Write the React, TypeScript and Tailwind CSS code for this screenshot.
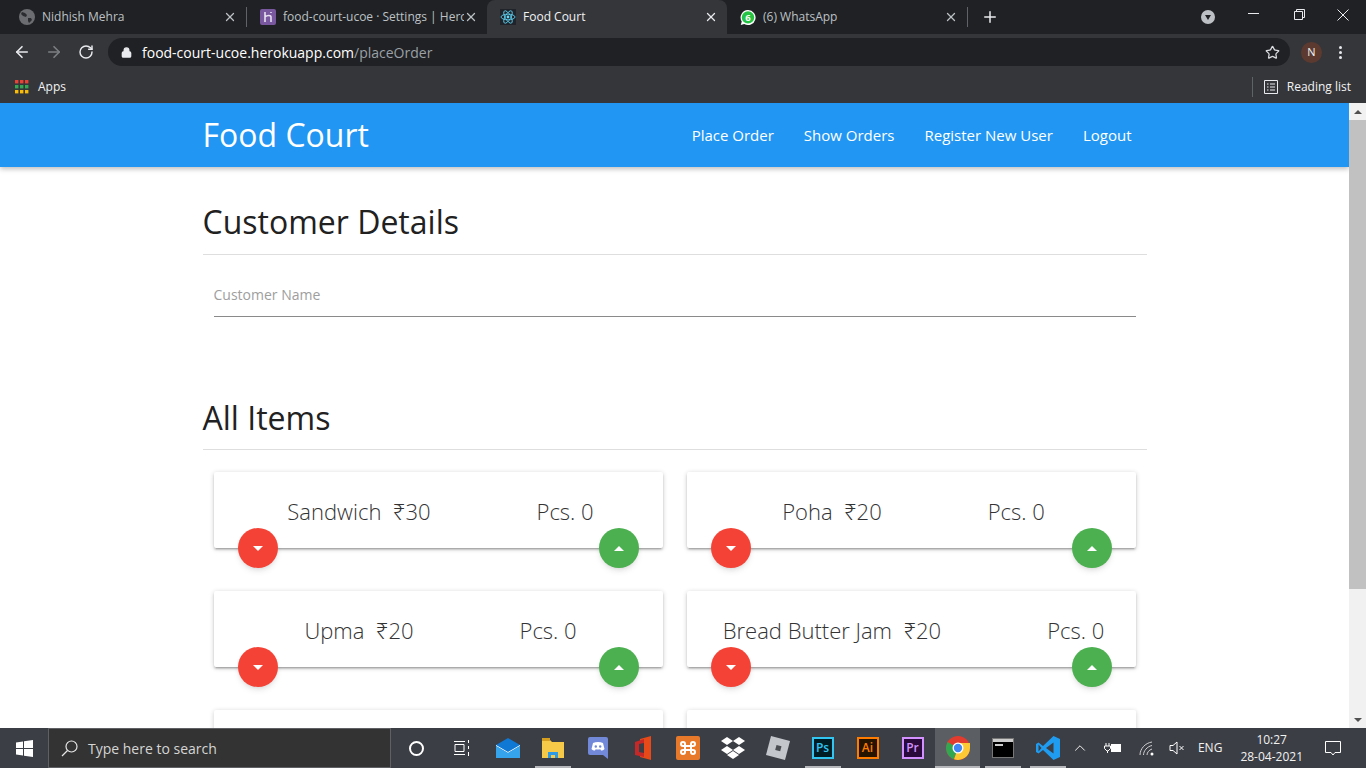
import { ArrowLeft, ArrowRight, ChevronUp, Lock, Plus, RotateCw, Star, X } from "lucide-react";

const ui = "font-['Open_Sans','Noto_Sans',sans-serif]";

const items = [
  [{ name: "Sandwich", price: 30 }, { name: "Poha", price: 20 }],
  [{ name: "Upma", price: 20 }, { name: "Bread Butter Jam", price: 20 }],
];

const Globe = () => (
  <svg width="16" height="16" viewBox="0 0 16 16">
    <circle cx="8" cy="8" r="8" fill="#6b6d70" />
    <path d="M3 3l3 1 2 2-1 2-3-1-2-2zM9 9l3 0 1 2-3 3-1-2z" fill="#2b2c2f" />
  </svg>
);

const HerokuIcon = () => (
  <svg width="16" height="16" viewBox="0 0 16 16">
    <rect width="16" height="16" rx="2" fill="#79589f" />
    <path d="M5 3v10M5 8c2-2 6-2 6 0v5M11 3v1" stroke="#e8e0f0" strokeWidth="1.6" fill="none" />
  </svg>
);

const ReactIcon = () => (
  <svg width="16" height="16" viewBox="0 0 16 16">
    <rect width="16" height="16" fill="#20232a" />
    <circle cx="8" cy="8" r="1.4" fill="#61dafb" />
    <g stroke="#61dafb" strokeWidth="0.8" fill="none">
      <ellipse cx="8" cy="8" rx="7" ry="2.8" />
      <ellipse cx="8" cy="8" rx="7" ry="2.8" transform="rotate(60 8 8)" />
      <ellipse cx="8" cy="8" rx="7" ry="2.8" transform="rotate(120 8 8)" />
    </g>
  </svg>
);

const WhatsAppIcon = () => (
  <svg width="17" height="17" viewBox="0 0 17 17">
    <path d="M8.5 0.5a8 8 0 1 1-4 14.9L0.8 16.4l1.1-3.6A8 8 0 0 1 8.5 0.5z" fill="#fff" />
    <circle cx="8.5" cy="8.4" r="6.6" fill="#25c344" />
    <text x="8.5" y="12" textAnchor="middle" fontSize="10" fontWeight="700" fill="#fff" fontFamily="Open Sans">6</text>
  </svg>
);

const Tab = ({ icon, title, active, fade }: { icon: React.ReactNode; title: string; active?: boolean; fade?: boolean }) => (
  <div
    className={`relative flex h-[34px] w-[240px] shrink-0 items-center pl-[13px] pr-[9px] ${
      active ? "rounded-t-lg bg-[#35363a] text-[#f1f3f4]" : "text-[#bdc1c6]"
    }`}
  >
    <span className="flex w-[16px] shrink-0 justify-center">{icon}</span>
    <span className={`ml-[7px] flex-1 overflow-hidden whitespace-nowrap text-[12px] ${fade ? "w-[176px]" : ""}`}>{title}</span>
    <X size={14} strokeWidth={2.2} className={active ? "text-[#e8eaed]" : "text-[#bdc1c6]"} />
  </div>
);

const Chrome = () => (
  <header className={`${ui} shrink-0`}>
    <div className="flex h-[34px] items-end bg-[#202124]">
      <div className="ml-[6px] flex items-center">
        <Tab icon={<Globe />} title="Nidhish Mehra" />
        <div className="h-[20px] w-px bg-[#5f6368]" />
        <Tab icon={<HerokuIcon />} title="food-court-ucoe · Settings | Hero" fade />
        <Tab icon={<ReactIcon />} title="Food Court" active />
        <Tab icon={<WhatsAppIcon />} title="(6) WhatsApp" />
        <div className="h-[20px] w-px bg-[#5f6368]" />
      </div>
      <Plus size={18} strokeWidth={2} className="mb-[8px] ml-[13px] text-[#e8eaed]" />
      <div className="mb-[10px] ml-[202px] flex h-[14px] w-[14px] items-center justify-center rounded-full bg-[#bdc1c6]">
        <span className="h-0 w-0 border-x-[3.5px] border-t-[5px] border-x-transparent border-t-[#202124]" />
      </div>
      <div className="ml-auto flex h-full items-center text-[#e8eaed]">
        <span className="mb-[7px] mr-[35px] h-px w-[11px] bg-[#e8eaed]" />
        <svg width="11" height="11" viewBox="0 0 11 11" fill="none" stroke="#e8eaed" className="mb-[5px] mr-[32px]">
          <path d="M0.5 2.5h8v8h-8zM2.5 2.5v-2h8v8h-2" />
        </svg>
        <svg width="12" height="12" viewBox="0 0 12 12" stroke="#e8eaed" className="mb-[5px] mr-[17px]">
          <path d="M0.5 0.5l11 11M11.5 0.5l-11 11" />
        </svg>
      </div>
    </div>
    <div className="flex h-[36px] items-center bg-[#35363a] text-[#e8eaed]">
      <ArrowLeft size={18} strokeWidth={2.2} className="ml-[13px]" />
      <ArrowRight size={18} strokeWidth={2.2} className="ml-[14px] text-[#7c7f83]" />
      <RotateCw size={16} strokeWidth={2.2} className="ml-[15px]" />
      <div className="ml-[14px] flex h-[28px] w-[1182px] items-center rounded-full bg-[#202124] pl-[13px] pr-[10px]">
        <Lock size={11} strokeWidth={3} fill="#e8eaed" />
        <span className="ml-[10px] text-[14px] text-white">
          food-court-ucoe.herokuapp.com<span className="text-[#9aa0a6]">/placeOrder</span>
        </span>
        <Star size={15} className="ml-auto text-[#dadce0]" />
      </div>
      <div className="ml-[11px] flex h-[21px] w-[21px] items-center justify-center rounded-full bg-[#5d3a30] text-[11px] text-[#f1f3f4]">N</div>
      <div className="ml-[17px] flex flex-col gap-[2px]">
        <span className="h-[3px] w-[3px] rounded-full bg-[#e8eaed]" />
        <span className="h-[3px] w-[3px] rounded-full bg-[#e8eaed]" />
        <span className="h-[3px] w-[3px] rounded-full bg-[#e8eaed]" />
      </div>
    </div>
    <div className="flex h-[33px] items-center bg-[#35363a] text-[#e8eaed]">
      <svg width="14" height="14" viewBox="0 0 14 14" className="ml-[15px]">
        {[0, 5, 10].map((x, i) =>
          [0, 5, 10].map((y, j) => (
            <rect key={`${i}${j}`} x={x} y={y} width="3.4" height="3.4" fill={["#ea4335", "#34a853", "#fbbc04"][j]} />
          ))
        )}
      </svg>
      <span className="ml-[9px] text-[12px] text-[#f1f3f4]">Apps</span>
      <div className="ml-auto h-[20px] w-px bg-[#5f6368]" />
      <svg width="14" height="14" viewBox="0 0 14 14" fill="none" stroke="#e8eaed" className="ml-[11px]">
        <path d="M0.5 0.5h13v13h-13zM3 4h1.5M6 4h5M3 7h1.5M6 7h5M3 10h1.5M6 10h5" />
      </svg>
      <span className="ml-[9px] mr-[15px] text-[12px] text-[#f1f3f4]">Reading list</span>
    </div>
  </header>
);

const ItemCard = ({ name, price }: { name: string; price: number }) => (
  <div className="relative h-[76px] w-[449px] rounded-[2px] bg-white shadow-[0_2px_2px_0_rgba(0,0,0,0.14),0_3px_1px_-2px_rgba(0,0,0,0.12),0_1px_5px_0_rgba(0,0,0,0.2)]">
    <div className="flex h-[76px] items-center justify-center gap-[106px] pl-[5px] pt-[2px] text-[22px] font-light text-[#333]">
      <span className="whitespace-pre">
        {name}  ₹{price}
      </span>
      <span>Pcs. 0</span>
    </div>
    <button className="absolute left-[24px] top-[56px] flex h-[40px] w-[40px] items-center justify-center rounded-full bg-[#f44336] shadow-md">
      <span className="h-0 w-0 border-x-[5px] border-t-[5px] border-x-transparent border-t-white" />
    </button>
    <button className="absolute right-[24px] top-[56px] flex h-[40px] w-[40px] items-center justify-center rounded-full bg-[#4caf50] shadow-md">
      <span className="h-0 w-0 border-x-[5px] border-b-[5px] border-x-transparent border-b-white" />
    </button>
  </div>
);

const NavLink = ({ label }: { label: string }) => <a className="text-[15px] text-white">{label}</a>;

const Page = () => (
  <div className="flex min-h-0 flex-1">
    <main className={`${ui} min-w-0 flex-1 overflow-hidden bg-white text-[#212121]`}>
      <nav className="relative z-10 flex h-[64px] justify-center bg-[#2196f3] shadow-[0_2px_5px_rgba(0,0,0,0.26)]">
        <div className="flex w-[944px] items-center justify-between">
          <span className="text-[32px] text-white">Food Court</span>
          <div className="mr-[15px] flex gap-[30px]">
            <NavLink label="Place Order" />
            <NavLink label="Show Orders" />
            <NavLink label="Register New User" />
            <NavLink label="Logout" />
          </div>
        </div>
      </nav>
      <div className="mx-auto w-[944px]">
        <h1 className="mt-[33px] h-[55px] border-b border-[#dedede] text-[32px] leading-[44px]">Customer Details</h1>
        <div className="mx-[11px] mt-[17px] h-[45px] border-b border-[#8a8a8a] pt-[13px] text-[14px] leading-[20px] text-[#9e9e9e]">
          Customer Name
        </div>
        <h1 className="mt-[79px] h-[54px] border-b border-[#dedede] text-[32px] leading-[44px]">All Items</h1>
        <div className="mx-[11px] mt-[22px] flex flex-col gap-[43px]">
          {items.map((row, i) => (
            <div key={i} className="flex justify-between">
              {row.map((item) => (
                <ItemCard key={item.name} {...item} />
              ))}
            </div>
          ))}
          <div className="flex justify-between">
            <div className="h-[76px] w-[449px] rounded-[2px] bg-white shadow-[0_1px_5px_0_rgba(0,0,0,0.2)]" />
            <div className="h-[76px] w-[449px] rounded-[2px] bg-white shadow-[0_1px_5px_0_rgba(0,0,0,0.2)]" />
          </div>
        </div>
      </div>
    </main>
    <div className="flex w-[17px] shrink-0 flex-col bg-[#f1f1f1]">
      <div className="flex h-[17px] items-center justify-center">
        <span className="h-0 w-0 border-x-[4px] border-b-[4px] border-x-transparent border-b-[#505050]" />
      </div>
      <div className="h-[469px] bg-[#c1c1c1]" />
      <div className="mt-auto flex h-[17px] items-center justify-center">
        <span className="h-0 w-0 border-x-[4px] border-t-[4px] border-x-transparent border-t-[#505050]" />
      </div>
    </div>
  </div>
);

const TaskIcon = ({ children, running, active }: { children: React.ReactNode; running?: boolean; active?: boolean }) => (
  <div className={`relative flex h-[40px] w-[45px] shrink-0 items-center justify-center ${active ? "bg-[#5b5e63]" : ""}`}>
    {children}
    {running && <span className={`absolute bottom-0 h-[2px] ${active ? "w-full" : "w-[36px]"} bg-[#b5b7ba]`} />}
  </div>
);

const AdobeIcon = ({ label, color, bg }: { label: string; color: string; bg: string }) => (
  <div
    className={`flex h-[22px] w-[22px] items-center justify-center border-2 text-[12px] font-semibold leading-none`}
    style={{ borderColor: color, color, backgroundColor: bg }}
  >
    {label}
  </div>
);

const Taskbar = () => (
  <footer className={`${ui} flex h-[40px] shrink-0 items-center bg-[#3b3e44] text-white`}>
    <div className="flex w-[48px] shrink-0 justify-center">
      <svg width="17" height="17" viewBox="0 0 17 17" fill="#fff">
        <path d="M0 2.5l7-1v6.5H0zM8 1.3l9-1.3v8H8zM0 9h7v6.5l-7-1zM8 9h9v8l-9-1.3z" />
      </svg>
    </div>
    <div className="flex h-[40px] w-[343px] shrink-0 items-center border border-[#5e6064] bg-[#333333] pl-[12px]">
      <svg width="17" height="17" viewBox="0 0 17 17" fill="none" stroke="#e6e6e6" strokeWidth="1.2">
        <circle cx="10.5" cy="6.5" r="5.5" />
        <path d="M6.5 10.5L1 16" />
      </svg>
      <span className="ml-[10px] text-[14px] text-[#d5d5d5]">Type here to search</span>
    </div>
    <div className="flex w-[47px] shrink-0 justify-center pl-[3px]">
      <span className="h-[15px] w-[15px] rounded-full border-2 border-white" />
    </div>
    <div className="flex w-[47px] shrink-0 justify-center">
      <svg width="16" height="16" viewBox="0 0 16 16" fill="none" stroke="#fff">
        <path d="M0 1.5h11M0 14.5h11M1 4.5h9v7H1zM14.5 0v3M14.5 6v3M14.5 12v4" />
      </svg>
    </div>
    <div className="flex items-center">
      <TaskIcon>
        <svg width="24" height="20" viewBox="0 0 24 20">
          <path d="M0 7L12 0l12 7v13H0z" fill="#0f78d4" />
          <path d="M0 7l12 7 12-7v1L12 15 0 8z" fill="#fff" />
          <path d="M0 8l12 7 12-7v12H0z" fill="#36a4ec" />
        </svg>
      </TaskIcon>
      <TaskIcon running>
        <svg width="22" height="20" viewBox="0 0 22 20">
          <path d="M0 2h8l2 2h12v16H0z" fill="#f7c948" />
          <path d="M0 0h8v3H0z" fill="#d69e1e" />
          <path d="M6 14h10v6h-3v-3H9v3H6z" fill="#2e9ae6" />
        </svg>
      </TaskIcon>
      <TaskIcon>
        <svg width="20" height="22" viewBox="0 0 20 22">
          <path d="M2 0h16a2 2 0 0 1 2 2v20l-5-4H2a2 2 0 0 1-2-2V2a2 2 0 0 1 2-2z" fill="#7289da" />
          <path d="M5 6c3-1.400 7-1.400 10 0l1.500 6c-1 1-2 1.500-3.500 1.500l-.7-1.200c-1.500.4-3 .4-4.600 0L7 13.500C5.500 13.500 4.500 13 3.500 12z" fill="#fff" />
          <circle cx="7.800" cy="9.500" r="1.200" fill="#7289da" />
          <circle cx="12.200" cy="9.500" r="1.200" fill="#7289da" />
        </svg>
      </TaskIcon>
      <TaskIcon>
        <svg width="18" height="24" viewBox="0 0 18 24">
          <path d="M6 3l11-3v24L6 21z" fill="#e64a19" />
          <path d="M1 6l9-3v18l-9-2z" fill="#c62828" />
          <path d="M5 8l5-1v10l-5-1z" fill="#3b3e44" />
        </svg>
      </TaskIcon>
      <TaskIcon>
        <div className="flex h-[24px] w-[24px] items-center justify-center rounded-[2px] bg-[#e8792b]">
          <svg width="16" height="14" viewBox="0 0 16 14" fill="none" stroke="#fff" strokeWidth="2">
            <path d="M5 5V3a2 2 0 1 0-2 2h10a2 2 0 1 0-2-2v8a2 2 0 1 0 2-2H3a2 2 0 1 0 2 2z" />
          </svg>
        </div>
      </TaskIcon>
      <TaskIcon>
        <svg width="24" height="24" viewBox="0 0 24 24" fill="#fff">
          <path d="M6 1l6 4-6 4-6-4zM18 1l6 4-6 4-6-4zM6 10l6 4-6 4-6-4zM18 10l6 4-6 4-6-4zM12 15l6 4-6 4-6-4z" />
        </svg>
      </TaskIcon>
      <TaskIcon>
        <svg width="24" height="24" viewBox="0 0 24 24">
          <path d="M5 0l19 5-5 19L0 19z" fill="#c3c7cc" />
          <path d="M10.500 9l5 1.300-1.300 5-5-1.300z" fill="#4a4d52" />
        </svg>
      </TaskIcon>
      <TaskIcon running>
        <AdobeIcon label="Ps" color="#31c5f0" bg="#001d26" />
      </TaskIcon>
      <TaskIcon>
        <AdobeIcon label="Ai" color="#ff7c00" bg="#261300" />
      </TaskIcon>
      <TaskIcon>
        <AdobeIcon label="Pr" color="#d291ff" bg="#2a0a3c" />
      </TaskIcon>
      <TaskIcon running active>
        <svg width="24" height="24" viewBox="0 0 24 24">
          <circle cx="12" cy="12" r="12" fill="#e33b2e" />
          <path d="M12 12L1.600 6A12 12 0 0 0 8 23.300z" fill="#31a752" />
          <path d="M12 12l-4 11.300A12 12 0 0 0 24 12V7H12z" fill="#fcc934" />
          <circle cx="12" cy="12" r="5.500" fill="#fff" />
          <circle cx="12" cy="12" r="4.200" fill="#4285f4" />
        </svg>
      </TaskIcon>
      <TaskIcon running>
        <div className="h-[20px] w-[22px] border border-[#777] bg-black">
          <div className="h-[3px] bg-[#ccc]" />
          <div className="mt-[2px] ml-[2px] h-[2px] w-[8px] bg-[#ccc]" />
        </div>
      </TaskIcon>
      <TaskIcon running>
        <svg width="24" height="24" viewBox="0 0 24 24">
          <path d="M17.500 0L24 3v18l-6.500 3L7 14l-4.500 3.500L0 16V8l2.500-1.500L7 10z" fill="#1f9cf0" />
          <path d="M17.500 6.500L10 12l7.500 5.500z" fill="#3b3e44" />
          <path d="M2.500 8.500L5.500 12l-3 3.500z" fill="#3b3e44" />
        </svg>
      </TaskIcon>
    </div>
    <div className="ml-auto flex h-full items-center text-[12px] text-[#f2f2f2]">
      <ChevronUp size={18} strokeWidth={1.3} className="mr-[15px]" />
      <svg width="18" height="12" viewBox="0 0 18 12" className="mr-[17px]">
        <path d="M2 1v3M5 1v3M0.500 4h6v2.500L4 9H3L0.500 6.500zM3.500 9v2" stroke="#fff" fill="none" />
        <rect x="7.500" y="2.500" width="9" height="7" fill="#fff" stroke="#fff" />
      </svg>
      <svg width="16" height="15" viewBox="0 0 16 15" fill="none" stroke="#cfd0d2" className="mr-[14px]">
        <path d="M1 14C1 8 6 2 13 1M4.500 14C4.500 10 8 5.500 13 4.500M8 14c0-2.500 2-5 5-6" />
        <circle cx="13" cy="13" r="1.500" fill="#fff" stroke="none" />
      </svg>
      <svg width="16" height="14" viewBox="0 0 16 14" fill="none" stroke="#fff" className="mr-[13px]">
        <path d="M1 4.500h3L8 1v12L4 9.500H1zM10.500 5l4 4M14.500 5l-4 4" />
      </svg>
      <span className="mr-[18px] text-[12px]">ENG</span>
      <div className="mr-[22px] flex flex-col items-center leading-[17px]">
        <span>10:27</span>
        <span>28-04-2021</span>
      </div>
      <svg width="16" height="16" viewBox="0 0 16 16" fill="none" stroke="#fff" className="mr-[25px]">
        <path d="M0.500 1.500h15v11H10L8 15l-2-2.500H0.500z" />
      </svg>
    </div>
  </footer>
);

export default function App() {
  return (
    <div className="flex h-screen w-full flex-col overflow-hidden">
      <Chrome />
      <Page />
      <Taskbar />
    </div>
  );
}
